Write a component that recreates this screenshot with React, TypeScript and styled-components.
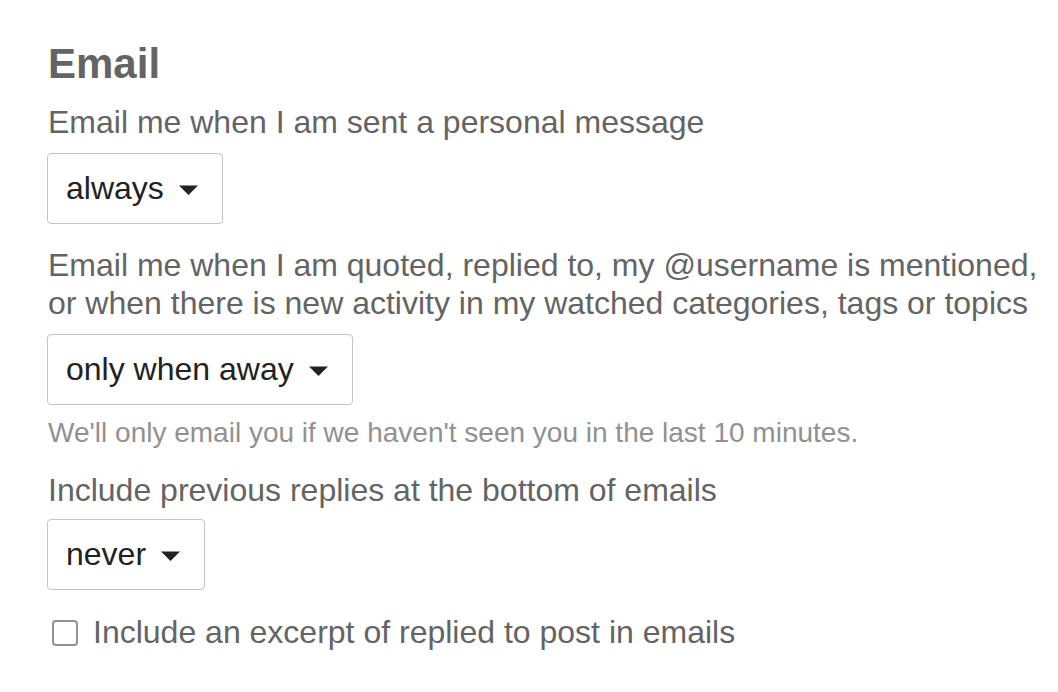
import React, { useState } from "react";
import styled, { createGlobalStyle } from "styled-components";

const GlobalStyle = createGlobalStyle`
  html, body {
    margin: 0;
    padding: 0;
    background: #ffffff;
  }
  body {
    font-family: "Liberation Sans", Arial, Helvetica, sans-serif;
  }
`;

const Page = styled.div`
  padding: 39px 10px 40px 48px;
  display: flex;
  flex-direction: column;
  align-items: flex-start;
`;

const Heading = styled.h3`
  margin: 0 0 14px 0;
  font-size: 42px;
  line-height: 50px;
  font-weight: 700;
  color: #646464;
`;

const Field = styled.div<{ $gapAfter?: number }>`
  display: flex;
  flex-direction: column;
  align-items: flex-start;
  margin-bottom: ${(p) => p.$gapAfter ?? 22}px;
`;

const Label = styled.label<{ $gap?: number }>`
  font-size: 32px;
  line-height: 38px;
  color: #646464;
  margin-bottom: ${(p) => p.$gap ?? 12}px;
`;

const SelectBox = styled.div`
  box-sizing: border-box;
  height: 71px;
  margin-left: -1px;
  display: inline-flex;
  align-items: center;
  gap: 15px;
  padding: 0 24px 0 18px;
  border: 1px solid #c4c4c4;
  border-radius: 4px;
  background: #ffffff;
  font-size: 32px;
  color: #222222;
  cursor: pointer;
`;

const Caret = styled.svg`
  width: 19px;
  height: 10px;
  flex: none;
  margin-top: 2px;
`;

const Help = styled.div`
  margin-top: 11px;
  font-size: 28px;
  line-height: 34px;
  color: #919191;
`;

const CheckRow = styled.label`
  display: flex;
  align-items: center;
  gap: 15px;
  font-size: 32px;
  line-height: 38px;
  color: #646464;
  cursor: pointer;
`;

const Box = styled.span<{ $on: boolean }>`
  box-sizing: border-box;
  width: 26px;
  height: 26px;
  margin-left: 4px;
  margin-top: 2px;
  border: 2px solid #8f8f9d;
  border-radius: 4px;
  background: ${(p) => (p.$on ? "#0075ff" : "#ffffff")};
  flex: none;
`;

const Select = ({ value }: { value: string }) => (
  <SelectBox>
    <span>{value}</span>
    <Caret viewBox="0 0 19 10">
      <path d="M0 0.5 H19 L9.5 10 Z" fill="#222222" />
    </Caret>
  </SelectBox>
);

const App = () => {
  const [excerpt, setExcerpt] = useState(false);

  return (
    <>
      <GlobalStyle />
      <Page>
        <Heading>Email</Heading>
        <Field>
          <Label>Email me when I am sent a personal message</Label>
          <Select value="always" />
        </Field>
        <Field $gapAfter={21}>
          <Label>
            Email me when I am quoted, replied to, my @username is mentioned,
            or when there is new activity in my watched categories, tags or
            topics
          </Label>
          <Select value="only when away" />
          <Help>
            We'll only email you if we haven't seen you in the last 10 minutes.
          </Help>
        </Field>
        <Field $gapAfter={23}>
          <Label $gap={10}>Include previous replies at the bottom of emails</Label>
          <Select value="never" />
        </Field>
        <CheckRow onClick={() => setExcerpt(!excerpt)}>
          <Box $on={excerpt} />
          Include an excerpt of replied to post in emails
        </CheckRow>
      </Page>
    </>
  );
};

export default App;
